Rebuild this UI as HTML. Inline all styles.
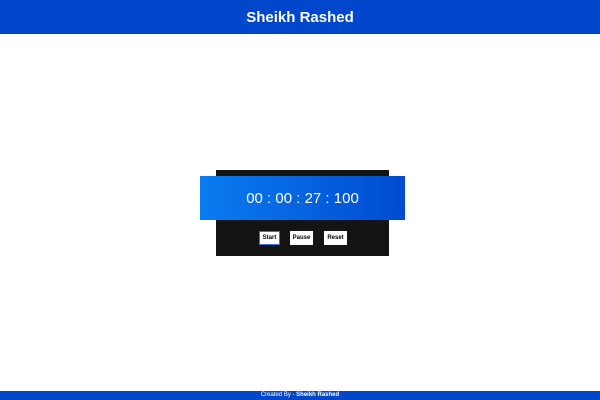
<!DOCTYPE html><html><head><style>
body{margin:0;width:600px;height:400px;position:relative;background:#fff;font-family:"Liberation Sans",sans-serif;overflow:hidden}
.h{position:absolute;left:0;top:0;width:600px;height:34px;background:#0047cc;color:#fff;font-size:15px;font-weight:bold;text-align:center;line-height:35px}
.f{position:absolute;left:0;top:391px;width:600px;height:9px;background:#0047cc;color:#fff;font-size:6px;text-align:center;line-height:9px}
.box{position:absolute;left:216px;top:170px;width:173px;height:86px;background:#141414}
.t{position:absolute;left:200px;top:176px;width:205px;height:44px;background:linear-gradient(90deg,#0a7cf0,#004bd0);color:#fff;font-size:15px;text-align:center;line-height:45px}
.b{position:absolute;top:231px;height:14px;background:#fff;color:#000;font-size:6px;font-weight:bold;display:flex;align-items:center;justify-content:center}
</style></head><body>
<div class="h">Sheikh Rashed</div>
<div class="box"></div>
<div class="t">00 : 00 : 27 : 100</div>
<div class="b" style="left:259px;width:21px;box-shadow:inset 0 0 0 1px #3a6fd8">Start</div>
<div class="b" style="left:290px;width:23px">Pause</div>
<div class="b" style="left:324px;width:23px">Reset</div>
<div class="f">Created By - <b>Sheikh Rashed</b></div>
</body></html>
